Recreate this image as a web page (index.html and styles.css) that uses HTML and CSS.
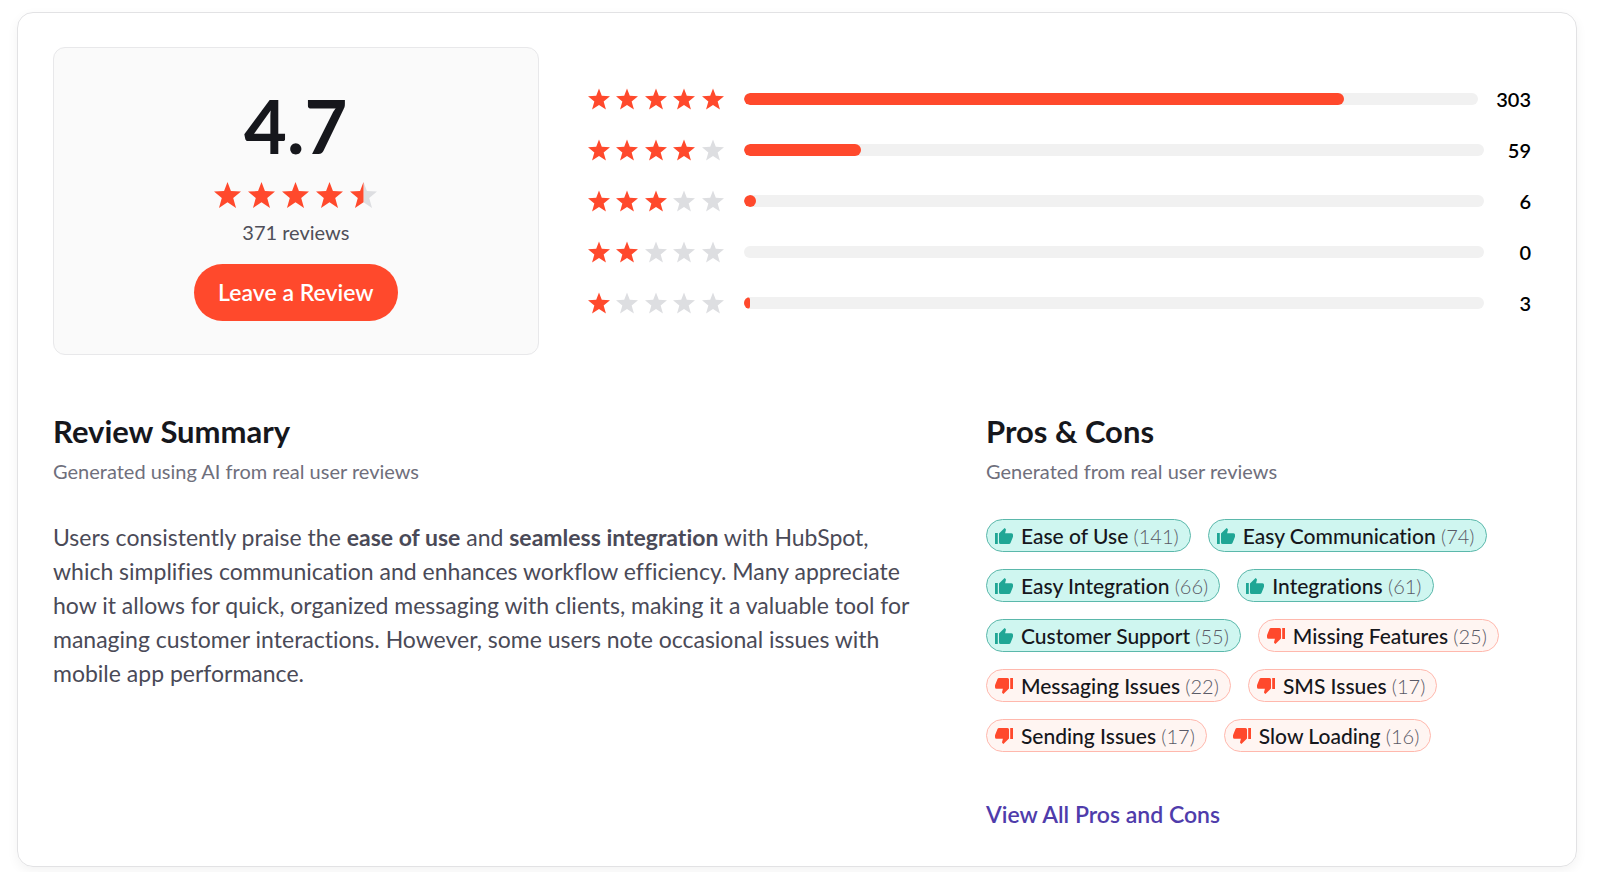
FILE: index.html
```html
<!DOCTYPE html>
<html lang="en">
<head>
  <meta charset="UTF-8">
  <meta name="viewport" content="width=device-width, initial-scale=1.0">
  <title>Reviews</title>
  <link rel="stylesheet" href="styles.css">
</head>
<body>
  <svg class="sprite" aria-hidden="true">
    <symbol id="star" viewBox="0 0 26 25">
      <path d="M13 0l3.3 8.7 9.7.5-7.5 6.2 2.7 9.6-8.2-5.4L4.800 25l2.700-9.600L0 9.200l9.700-.5z"/>
    </symbol>
    <symbol id="half-star" viewBox="0 0 26 25">
      <path class="off" d="M13 0l3.3 8.7 9.7.5-7.5 6.2 2.7 9.6-8.2-5.4z"/>
      <path d="M13 0v19.6L4.800 25l2.700-9.600L0 9.200l9.700-.5z"/>
    </symbol>
    <symbol id="thumb" viewBox="0 0 18 16">
      <path d="M0 5h2.8v11H0zM4 5.6 9.6 0l1.1 1q.4.4.2 1l-.8 3.2h6.4q1.5 0 1.5 1.5v1.8q0 .4-.2.8l-2.3 5.6q-.4 1.1-1.5 1.1H5.500Q4 16 4 14.500z"/>
    </symbol>
  </svg>

  <main class="card">
    <section class="ratings">
      <div class="score">
        <div class="score-value">4.7</div>
        <div class="stars stars-lg" role="img" aria-label="4.7 out of 5 stars">
          <svg><use href="#star"/></svg><svg><use href="#star"/></svg><svg><use href="#star"/></svg><svg><use href="#star"/></svg><svg><use href="#half-star"/></svg>
        </div>
        <div class="score-count">371 reviews</div>
        <button type="button" class="btn">Leave a Review</button>
      </div>

      <div class="breakdown" id="breakdown"></div>
    </section>

    <section class="details">
      <div class="summary">
        <h2>Review Summary</h2>
        <p class="subtitle">Generated using AI from real user reviews</p>
        <p class="summary-text">Users consistently praise the <strong>ease of use</strong> and <strong>seamless integration</strong> with HubSpot, which simplifies communication and enhances workflow efficiency. Many appreciate how it allows for quick, organized messaging with clients, making it a valuable tool for managing customer interactions. However, some users note occasional issues with mobile app performance.</p>
      </div>

      <div class="pros-cons">
        <h2>Pros &amp; Cons</h2>
        <p class="subtitle">Generated from real user reviews</p>
        <ul class="tags" id="tags"></ul>
        <a href="#" class="view-all">View All Pros and Cons</a>
      </div>
    </section>
  </main>

  <script>
    const total = 371;
    const ratings = [[5, 303], [4, 59], [3, 6], [2, 0], [1, 3]];
    const tags = [
      ['Ease of Use', 141, 'pro'],
      ['Easy Communication', 74, 'pro'],
      ['Easy Integration', 66, 'pro'],
      ['Integrations', 61, 'pro'],
      ['Customer Support', 55, 'pro'],
      ['Missing Features', 25, 'con'],
      ['Messaging Issues', 22, 'con'],
      ['SMS Issues', 17, 'con'],
      ['Sending Issues', 17, 'con'],
      ['Slow Loading', 16, 'con']
    ];

    document.getElementById('breakdown').innerHTML = ratings.map(([stars, count]) => {
      let icons = '';
      for (let i = 1; i <= 5; i++) {
        icons += `<svg${i > stars ? ' class="off"' : ''}><use href="#star"/></svg>`;
      }
      return `<div class="row">
        <div class="stars" role="img" aria-label="${stars} stars">${icons}</div>
        <div class="bar"><div class="bar-fill" style="width: ${count / total * 100}%"></div></div>
        <div class="count">${count}</div>
      </div>`;
    }).join('');

    document.getElementById('tags').innerHTML = tags.map(([name, count, type]) =>
      `<li class="tag ${type}"><svg><use href="#thumb"/></svg><span>${name} <span class="tag-count">(${count})</span></span></li>`
    ).join('');
  </script>
</body>
</html>
```
FILE: styles.css
```css
* {
  box-sizing: border-box;
}
body {
  font-family: Lato, "Open Sans", sans-serif;
  font-variant-ligatures: none;
  background: #fff;
  color: #16171c;
  margin: 0;
  padding: 12px 23px 5px 17px;
}
h2, p, ul {
  margin: 0;
  padding: 0;
}
.sprite {
  position: absolute;
  width: 0;
  height: 0;
}
.card {
  border: 1px solid #e2e2e4;
  border-radius: 16px;
  box-shadow: 0 4px 12px rgba(0, 0, 0, 0.05);
  padding: 34px 34px 35px 35px;
}
.ratings {
  display: grid;
  grid-template-columns: 1fr 2fr;
  gap: 32px;
}
.score {
  display: flex;
  flex-direction: column;
  align-items: center;
  height: 308px;
  padding-top: 41px;
  background: #fafafa;
  border: 1px solid #e8e8ea;
  border-radius: 12px;
}
.score-value {
  font-size: 74px;
  line-height: 74px;
  font-weight: 700;
}
.stars {
  display: flex;
  justify-content: space-between;
  width: 136px;
  fill: #ff492c;
}
.stars svg {
  width: 22px;
  height: 22px;
}
.stars-lg {
  width: 163px;
  margin-top: 19px;
}
.stars-lg svg {
  width: 27px;
  height: 26px;
}
.off {
  fill: #dddee1;
}
.score-count {
  margin-top: 10px;
  font-size: 20px;
  line-height: 28px;
  color: #4f4f59;
}
.btn {
  margin-top: 18px;
  height: 57px;
  padding: 0 24px 2px;
  background: #ff492c;
  color: #fff;
  border: none;
  border-radius: 29px;
  font-family: inherit;
  font-size: 23px;
  font-weight: 600;
  cursor: pointer;
}
.breakdown {
  display: flex;
  flex-direction: column;
  justify-content: center;
  gap: 23px;
  padding: 0 11px 0 17px;
}
.row {
  display: flex;
  align-items: center;
}
.bar {
  flex: 1;
  height: 12px;
  margin: 0 18px 0 20px;
  background: #f1f1f1;
  border-radius: 6px;
  overflow: hidden;
}
.bar-fill {
  height: 100%;
  background: #ff492c;
  border-radius: 6px;
}
.count {
  min-width: 29px;
  font-size: 20px;
  line-height: 28px;
  font-weight: 600;
  color: #000;
  text-align: right;
}
.details {
  display: grid;
  grid-template-columns: 14fr 9fr;
  gap: 68px;
  margin-top: 56px;
}
h2 {
  font-size: 31px;
  line-height: 40px;
  font-weight: 700;
}
.subtitle {
  margin-top: 6px;
  font-size: 20px;
  line-height: 28px;
  color: #6f6f7c;
}
.summary-text {
  margin-top: 35px;
  font-size: 23px;
  line-height: 34px;
  color: #4a4a57;
}
.tags {
  display: flex;
  flex-wrap: wrap;
  gap: 17px;
  margin-top: 34px;
  list-style: none;
}
.tag {
  display: flex;
  align-items: center;
  gap: 8px;
  height: 33px;
  padding: 0 11px 0 8px;
  border: 1px solid;
  border-radius: 17px;
  font-size: 21px;
  font-weight: 500;
}
.tag svg {
  width: 18px;
  height: 16px;
}
.pro {
  background: #cff6f0;
  border-color: #5bb8ab;
}
.pro svg {
  fill: #1fa695;
}
.con {
  background: #fff5f2;
  border-color: #ffb8ad;
}
.con svg {
  fill: #ff492c;
  transform: rotate(180deg);
}
.tag-count {
  font-size: 20px;
  font-weight: 300;
  color: #5a5a66;
}
.view-all {
  display: inline-block;
  margin-top: 45px;
  font-size: 23px;
  line-height: 34px;
  font-weight: 600;
  color: #4f3cab;
  text-decoration: none;
}
```
